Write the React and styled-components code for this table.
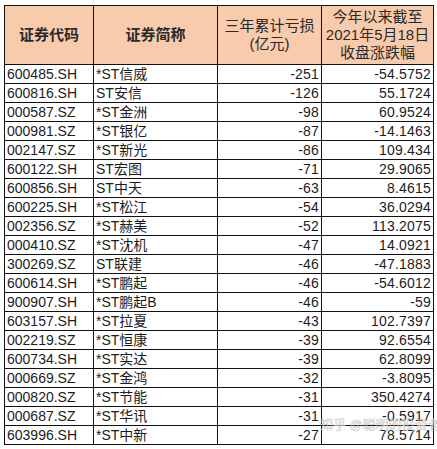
import React from 'react';
import styled, { createGlobalStyle } from 'styled-components';

const GlobalStyle = createGlobalStyle`
  html, body {
    margin: 0;
    padding: 0;
    background: #fff;
  }
  body {
    font-family: "Liberation Sans", "Noto Sans CJK SC", sans-serif;
  }
`;

const Sheet = styled.div`
  position: relative;
  width: 437px;
  height: 449px;
  overflow: hidden;
  padding: 5px 0 0 4px;
  box-sizing: border-box;
  background-image: linear-gradient(#e4e4e4, #e4e4e4);
  background-size: 1px 5px;
  background-repeat: no-repeat;
  background-position: 93px 0;
`;

const Table = styled.table`
  border-collapse: collapse;
  table-layout: fixed;
  width: 429px;
  color: #1c1c1c;
`;

const HeadCell = styled.th`
  background: #f8cbad;
  border: 1px solid #111;
  height: 58px;
  padding: 0;
  font-size: 15px;
  font-weight: ${(p) => (p.$light ? 400 : 700)};
  line-height: 18px;
  color: #2a2a2a;
  text-align: center;
  vertical-align: middle;
`;

const Cell = styled.td`
  border: 1px solid #111;
  height: 18px;
  padding: 0 2px;
  font-size: 14px;
  line-height: 18px;
  white-space: nowrap;
  text-align: ${(p) => (p.$num ? 'right' : 'left')};
  letter-spacing: ${(p) => (p.$num ? '0.2px' : '0')};
`;

const Watermark = styled.div`
  position: absolute;
  left: 320px;
  top: 414px;
  font-size: 13px;
  color: rgba(255, 255, 255, 0.55);
  text-shadow: 0 0 1px rgba(90, 90, 90, 0.6);
  white-space: nowrap;
  pointer-events: none;
`;

const rows = [
  ['600485.SH', '*ST信威', '-251', '-54.5752'],
  ['600816.SH', 'ST安信', '-126', '55.1724'],
  ['000587.SZ', '*ST金洲', '-98', '60.9524'],
  ['000981.SZ', '*ST银亿', '-87', '-14.1463'],
  ['002147.SZ', '*ST新光', '-86', '109.434'],
  ['600122.SH', 'ST宏图', '-71', '29.9065'],
  ['600856.SH', 'ST中天', '-63', '8.4615'],
  ['600225.SH', '*ST松江', '-54', '36.0294'],
  ['002356.SZ', '*ST赫美', '-52', '113.2075'],
  ['000410.SZ', '*ST沈机', '-47', '14.0921'],
  ['300269.SZ', 'ST联建', '-46', '-47.1883'],
  ['600614.SH', '*ST鹏起', '-46', '-54.6012'],
  ['900907.SH', '*ST鹏起B', '-46', '-59'],
  ['603157.SH', '*ST拉夏', '-43', '102.7397'],
  ['002219.SZ', '*ST恒康', '-39', '92.6554'],
  ['600734.SH', '*ST实达', '-39', '62.8099'],
  ['000669.SZ', '*ST金鸿', '-32', '-3.8095'],
  ['000820.SZ', '*ST节能', '-31', '350.4274'],
  ['000687.SZ', '*ST华讯', '-31', '-0.5917'],
  ['603996.SH', '*ST中新', '-27', '78.5714'],
];

const App = () => (
  <>
    <GlobalStyle />
    <Sheet>
      <Table>
        <colgroup>
          <col style={{ width: 89 }} />
          <col style={{ width: 124 }} />
          <col style={{ width: 104 }} />
          <col style={{ width: 112 }} />
        </colgroup>
        <thead>
          <tr>
            <HeadCell>证券代码</HeadCell>
            <HeadCell>证券简称</HeadCell>
            <HeadCell $light>
              三年累计亏损
              <br />
              (亿元)
            </HeadCell>
            <HeadCell $light>
              今年以来截至
              <br />
              2021年5月18日
              <br />
              收盘涨跌幅
            </HeadCell>
          </tr>
        </thead>
        <tbody>
          {rows.map((r) => (
            <tr key={r[0]}>
              <Cell>{r[0]}</Cell>
              <Cell>{r[1]}</Cell>
              <Cell $num>{r[2]}</Cell>
              <Cell $num>{r[3]}</Cell>
            </tr>
          ))}
        </tbody>
      </Table>
      <Watermark>知乎 @聪明的投资者</Watermark>
    </Sheet>
  </>
);

export default App;
